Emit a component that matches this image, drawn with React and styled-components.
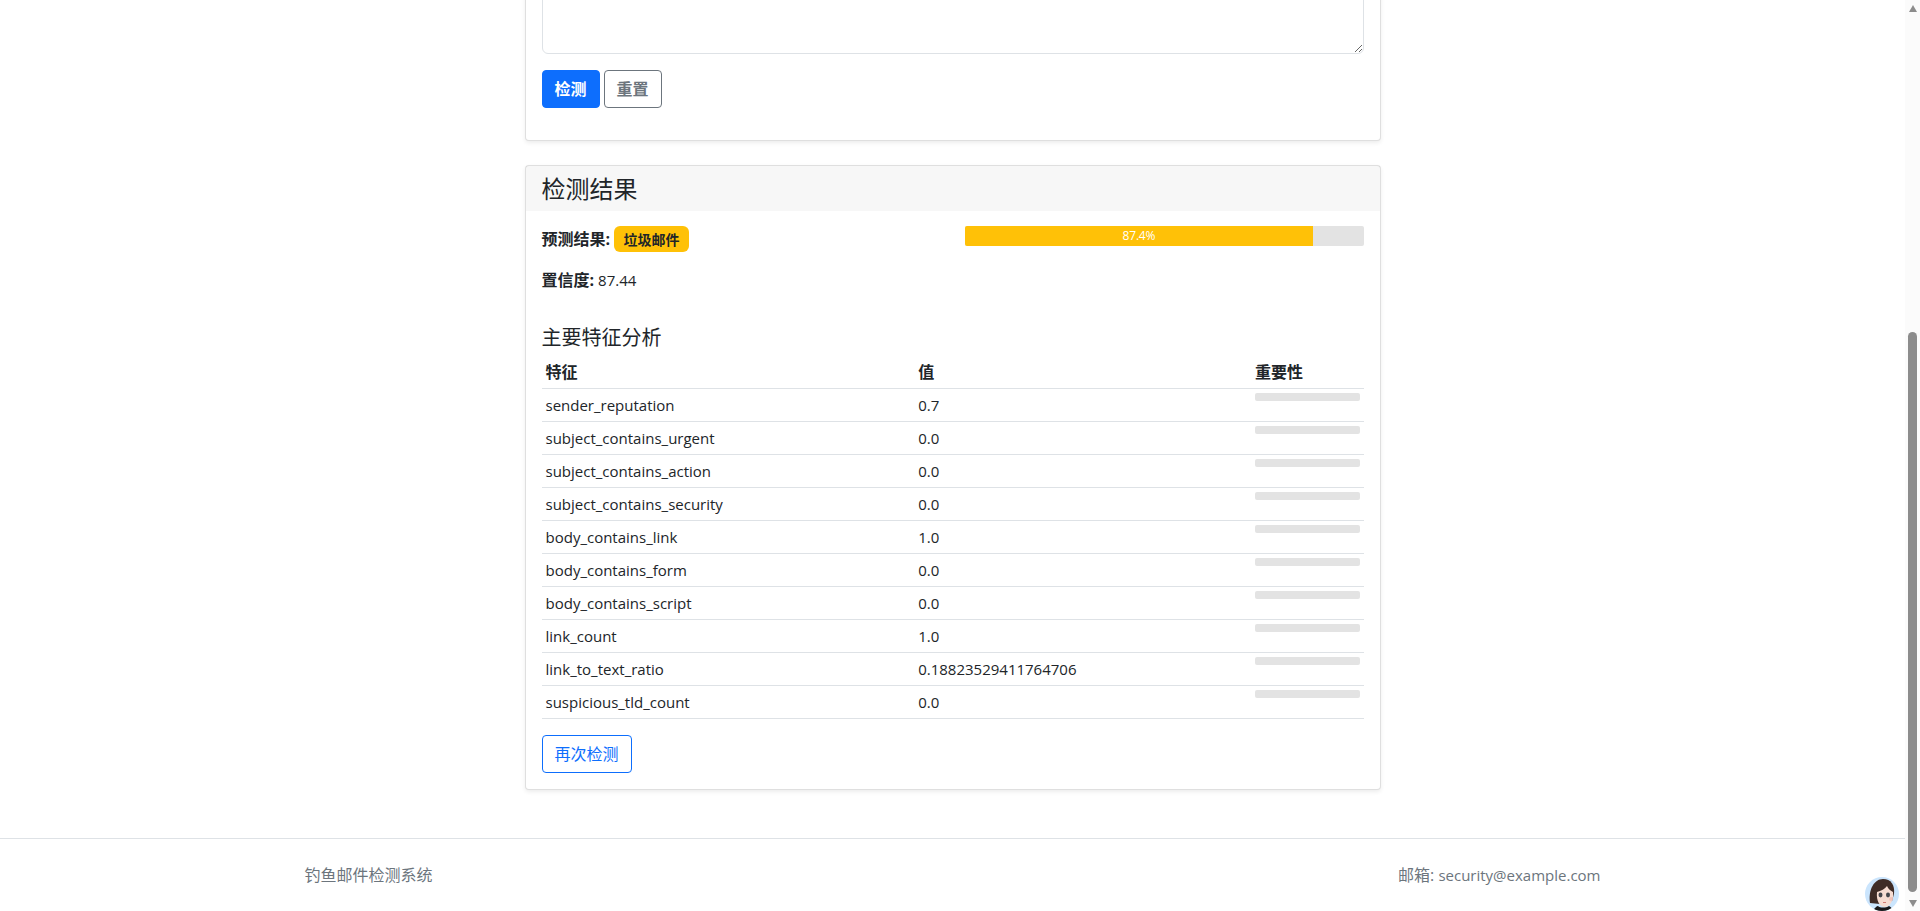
import React from "react";
import styled, { createGlobalStyle } from "styled-components";

const sans = `"Open Sans", "Noto Sans CJK SC", sans-serif`;

const Global = createGlobalStyle`
  html, body { margin: 0; padding: 0; height: 100%; overflow: hidden; background: #fff; }
  body { font-family: ${sans}; font-size: 16px; line-height: 1.5; color: #212529; }
  * { box-sizing: border-box; }
`;

const Shell = styled.div`
  display: flex;
  height: 911px;
  overflow: hidden;
`;
const Page = styled.div`
  flex: 1;
  min-width: 0;
  overflow: hidden;
`;
const Main = styled.main`
  width: 856px;
  margin: -165px auto 48px;
`;
const Card = styled.section`
  background: #fff;
  border: 1px solid rgba(0, 0, 0, 0.125);
  border-radius: 4px;
  box-shadow: 0 2px 4px rgba(0, 0, 0, 0.075);
  margin-bottom: ${(p) => p.$mb || 0}px;
`;
const CardHeader = styled.header`
  background: rgba(0, 0, 0, 0.03);
  padding: 8px 16px;
  height: 45px;
`;
const CardTitle = styled.h4`
  margin: 0;
  font-size: 24px;
  font-weight: 400;
  line-height: 30px;
`;
const CardBody = styled.div`
  padding: ${(p) => p.$pt || 16}px 16px 16px;
`;
const EmailInput = styled.textarea`
  display: block;
  width: 100%;
  height: 202px;
  margin-bottom: 16px;
  border: 1px solid #dee2e6;
  border-radius: 6px;
  padding: 6px 12px;
  resize: vertical;
  background: #fff;
`;
const Actions = styled.div`
  display: flex;
  gap: 4px;
  margin-bottom: 16px;
`;
const Button = styled.button`
  height: 38px;
  padding: 0 12px;
  border: 1px solid ${(p) => p.$color};
  border-radius: 4px;
  font: ${(p) => (p.$bold ? 700 : 400)} 16px/1.5 ${sans};
  color: ${(p) => (p.$filled ? "#fff" : p.$color)};
  background: ${(p) => (p.$filled ? p.$color : "#fff")};
`;
const SummaryRow = styled.div`
  display: grid;
  grid-template-columns: 1fr 1fr;
  column-gap: 24px;
`;
const Line = styled.p`
  margin: 0 0 ${(p) => p.$mb}px;
  font-size: 15px;
  height: ${(p) => p.$h}px;
  display: flex;
  align-items: center;
  gap: 4px;
`;
const Strong = styled.strong`
  font-weight: 700;
  font-size: 16px;
`;
const Badge = styled.span`
  display: inline-flex;
  align-items: center;
  justify-content: center;
  width: 75px;
  height: 26px;
  border-radius: 6px;
  background: #ffc107;
  color: #212529;
  font-size: 14px;
  font-weight: 700;
`;
const Track = styled.div`
  height: ${(p) => p.$h}px;
  background: #e3e3e3;
  border-radius: 2px;
  overflow: hidden;
`;
const Fill = styled.div`
  height: 100%;
  background: #ffc107;
  color: #fff;
  font-size: 12px;
  letter-spacing: -0.2px;
  line-height: 20px;
  text-align: center;
`;
const SectionTitle = styled.h5`
  margin: 0 0 6px;
  padding-top: 18px;
  font-size: 20px;
  font-weight: 400;
  line-height: 24px;
`;
const Table = styled.table`
  width: 100%;
  table-layout: fixed;
  border-collapse: collapse;
  margin-bottom: 16px;
  font-size: 15px;
`;
const Th = styled.th`
  text-align: left;
  font-weight: 700;
  font-size: 16px;
  padding: 4px;
  line-height: 24px;
  border-bottom: 1px solid #dee2e6;
`;
const Td = styled.td`
  padding: 4px;
  line-height: 24px;
  vertical-align: top;
  border-bottom: 1px solid #dee2e6;
`;
const Footer = styled.footer`
  border-top: 1px solid #dee2e6;
  padding: 24px 0;
`;
const FooterInner = styled.div`
  width: 1296px;
  margin: 0 auto;
  display: flex;
  justify-content: space-between;
  font-size: 16px;
  line-height: 24px;
  color: #6c757d;
`;
const Latin = styled.span`
  font-size: 15px;
`;
const Scrollbar = styled.aside`
  width: 15px;
  flex: none;
  background: #fbfbfb;
  display: flex;
  flex-direction: column;
  align-items: center;
`;
const Arrow = styled.span`
  width: 0;
  height: 0;
  border-left: 4.5px solid transparent;
  border-right: 4.5px solid transparent;
  ${(p) => (p.$up ? "border-bottom" : "border-top")}: 7px solid #8c8c8c;
  margin-top: ${(p) => p.$mt}px;
`;
const Thumb = styled.div`
  width: 9px;
  height: 560px;
  margin-top: 320px;
  background: #8c8c8c;
  border-radius: 5px;
`;
const AvatarButton = styled.div`
  position: fixed;
  left: 1865px;
  top: 877px;
  width: 34px;
  height: 34px;
`;

const rows = [
  ["sender_reputation", "0.7"],
  ["subject_contains_urgent", "0.0"],
  ["subject_contains_action", "0.0"],
  ["subject_contains_security", "0.0"],
  ["body_contains_link", "1.0"],
  ["body_contains_form", "0.0"],
  ["body_contains_script", "0.0"],
  ["link_count", "1.0"],
  ["link_to_text_ratio", "0.18823529411764706"],
  ["suspicious_tld_count", "0.0"],
];

function Avatar() {
  return (
    <svg width="34" height="34" viewBox="0 0 34 34">
      <defs>
        <clipPath id="c"><circle cx="17" cy="17" r="17" /></clipPath>
      </defs>
      <g clipPath="url(#c)">
        <rect width="34" height="34" fill="#cbe5fd" />
        <path d="M5 26C3 13 9 2 18 2c8 0 12 6 11 15l-2 7-12 3z" fill="#3f2c27" />
        <path d="M12 15c4-1 8-3 10-6 1 3 4 5 6 6 1 8-3 15-8 15-5 0-9-6-8-15z" fill="#f7dcd2" />
        <ellipse cx="15.5" cy="18" rx="2" ry="2.4" fill="#45454b" />
        <ellipse cx="23" cy="18" rx="2" ry="2.4" fill="#45454b" />
        <circle cx="26" cy="22" r="2" fill="#f0bdb4" opacity="0.8" />
        <path d="M18 25.5h3" stroke="#d27a74" strokeWidth="1.2" />
        <path d="M8 34c1-3 4-5 5-5 2 2 8 2 11 0 2 1 4 3 4 5z" fill="#1a181a" />
      </g>
    </svg>
  );
}

export default function App() {
  return (
    <Shell>
      <Global />
      <Page>
        <Main>
          <Card $mb={24}>
            <CardBody>
              <EmailInput readOnly />
              <Actions>
                <Button $color="#0d6efd" $filled $bold>检测</Button>
                <Button $color="#6c757d" $bold>重置</Button>
              </Actions>
            </CardBody>
          </Card>
          <Card>
            <CardHeader>
              <CardTitle>检测结果</CardTitle>
            </CardHeader>
            <CardBody $pt={15}>
              <SummaryRow>
                <div>
                  <Line $h={26} $mb={16}>
                    <Strong>预测结果:</Strong>
                    <Badge>垃圾邮件</Badge>
                  </Line>
                  <Line $h={24} $mb={16}>
                    <Strong>置信度:</Strong> 87.44
                  </Line>
                </div>
                <div>
                  <Track $h={20}>
                    <Fill style={{ width: "87.44%" }}>87.4%</Fill>
                  </Track>
                </div>
              </SummaryRow>
              <SectionTitle>主要特征分析</SectionTitle>
              <Table>
                <colgroup>
                  <col style={{ width: "372.7px" }} />
                  <col style={{ width: "336.8px" }} />
                  <col />
                </colgroup>
                <thead>
                  <tr>
                    <Th>特征</Th>
                    <Th>值</Th>
                    <Th>重要性</Th>
                  </tr>
                </thead>
                <tbody>
                  {rows.map(([name, value]) => (
                    <tr key={name}>
                      <Td>{name}</Td>
                      <Td>{value}</Td>
                      <Td><Track $h={8} /></Td>
                    </tr>
                  ))}
                </tbody>
              </Table>
              <Button $color="#0d6efd">再次检测</Button>
            </CardBody>
          </Card>
        </Main>
        <Footer>
          <FooterInner>
            <span>钓鱼邮件检测系统</span>
            <span>邮箱: <Latin>security@example.com</Latin></span>
          </FooterInner>
        </Footer>
      </Page>
      <Scrollbar>
        <Arrow $up $mt={5} />
        <Thumb />
        <Arrow $mt={8} />
      </Scrollbar>
      <AvatarButton><Avatar /></AvatarButton>
    </Shell>
  );
}
